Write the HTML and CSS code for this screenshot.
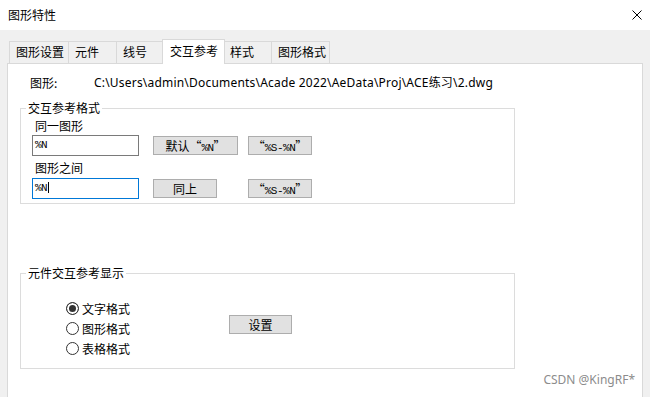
FILE: index.html
```html
<!DOCTYPE html>
<html lang="zh-CN">
<head>
  <meta charset="UTF-8" />
  <title>图形特性</title>
  <link rel="stylesheet" href="styles.css">
</head>
<body>
  <div class="window">
    <div class="titlebar">
      <span class="title">图形特性</span>
      <svg class="close" width="10" height="10" viewBox="0 0 10 10">
        <path d="M0.5 0.5 L9.5 9.5 M9.5 0.5 L0.5 9.5" stroke="#000" stroke-width="1" fill="none" />
      </svg>
    </div>

    <div class="dialog">
      <div class="tabs">
        <div class="tab">图形设置</div>
        <div class="tab short">元件</div>
        <div class="tab short">线号</div>
        <div class="tab active">交互参考</div>
        <div class="tab short">样式</div>
        <div class="tab">图形格式</div>
      </div>

      <div class="panel">
        <div class="file-row">
          <span class="file-label">图形:</span>
          <span class="file-path">C:\Users\admin\Documents\Acade 2022\AeData\Proj\ACE练习\2.dwg</span>
        </div>

        <fieldset class="group">
          <legend>交互参考格式</legend>
          <div class="group-body format-body">
            <div class="field-label">同一图形</div>
            <div class="field-row">
              <div class="textbox">%N</div>
              <button class="btn btn-default">默认<span class="q">“</span><span class="code">%N</span><span class="q">”</span></button>
              <button class="btn btn-quote"><span class="q">“</span><span class="code">%S-%N</span><span class="q">”</span></button>
            </div>
            <div class="field-label second">图形之间</div>
            <div class="field-row second">
              <div class="textbox focused">%N</div>
              <button class="btn btn-same">同上</button>
              <button class="btn btn-quote"><span class="q">“</span><span class="code">%S-%N</span><span class="q">”</span></button>
            </div>
          </div>
        </fieldset>

        <fieldset class="group display-group">
          <legend>元件交互参考显示</legend>
          <div class="group-body display-body">
            <div class="radios">
              <div class="radio checked"><span class="radio-mark"></span>文字格式</div>
              <div class="radio"><span class="radio-mark"></span>图形格式</div>
              <div class="radio"><span class="radio-mark"></span>表格格式</div>
            </div>
            <button class="btn btn-setup">设置</button>
          </div>
        </fieldset>

        <div class="watermark">CSDN @KingRF*</div>
      </div>
    </div>
  </div>
</body>
</html>
```

FILE: styles.css
```css
html, body {
  margin: 0;
  padding: 0;
  background: #f0f0f0;
  font-family: "Noto Sans", "Noto Sans CJK SC", sans-serif;
  font-size: 12px;
  color: #000;
}

.window {
  width: 650px;
  height: 397px;
  overflow: hidden;
  display: flex;
  flex-direction: column;
}

.titlebar {
  flex: none;
  height: 30px;
  background: #fff;
  display: flex;
  align-items: center;
  justify-content: space-between;
  padding: 0 8px;
}

.title {
  font-family: "Noto Sans CJK SC", sans-serif;
  line-height: 16px;
}

.dialog {
  flex: 1;
  display: flex;
  flex-direction: column;
  padding: 9px 7px 0 7px;
  min-height: 0;
}

/* tabs */
.tabs {
  flex: none;
  display: flex;
  align-items: flex-end;
  height: 24px;
  padding-left: 2px;
}

.tab {
  box-sizing: border-box;
  width: 59px;
  height: 22px;
  padding-left: 6px;
  line-height: 20px;
  font-family: "Noto Sans CJK SC", sans-serif;
  background: #f0f0f0;
  border-top: 1px solid #d9d9d9;
  border-left: 1px solid #d9d9d9;
  white-space: nowrap;
}

.tab.short {
  width: 48px;
}

.tab:last-child {
  border-right: 1px solid #d9d9d9;
}

.tab.active {
  position: relative;
  z-index: 2;
  width: 63px;
  height: 25px;
  margin: 0 -2px -1px -2px;
  padding-left: 7px;
  line-height: 21px;
  background: #fff;
  border-right: 1px solid #d9d9d9;
}

/* page */
.panel {
  flex: 1;
  position: relative;
  background: #fff;
  border: 1px solid #d9d9d9;
  border-bottom: none;
  padding: 11px 12px 0 12px;
}

.file-row {
  display: flex;
  margin-left: 10px;
  line-height: 16px;
}

.file-label {
  width: 64px;
  font-family: "Noto Sans CJK SC", sans-serif;
}

.file-path {
  letter-spacing: 0.2px;
}

.group {
  box-sizing: border-box;
  width: 495px;
  margin: 9px 0 0 0;
  padding: 0;
  min-inline-size: 0;
  border: 1px solid #dcdcdc;
}

.group legend {
  margin-left: 5px;
  padding: 0 2px;
  line-height: 16px;
  font-family: "Noto Sans CJK SC", sans-serif;
}

.group-body {
  padding: 2px 0 4px 11px;
}

.field-label {
  margin-left: 3px;
  line-height: 16px;
  font-family: "Noto Sans CJK SC", sans-serif;
}

.field-label.second {
  margin-top: 4px;
}

.field-row {
  display: flex;
  align-items: center;
  width: 280px;
  margin-top: 1px;
}

.field-row.second {
  margin-top: 2px;
}

.textbox {
  box-sizing: border-box;
  width: 107px;
  height: 21px;
  padding-left: 2px;
  border: 1px solid #7a7a7a;
  font-family: "Liberation Mono", monospace;
  font-size: 11px;
  letter-spacing: -0.5px;
  line-height: 19px;
}

.textbox.focused {
  border-color: #0078d7;
}

.textbox.focused::after {
  content: "";
  display: inline-block;
  width: 1px;
  height: 11px;
  margin-left: 1px;
  background: #000;
  vertical-align: -2px;
}

.btn {
  box-sizing: border-box;
  height: 19px;
  padding: 0;
  border: 1px solid #adadad;
  border-radius: 0;
  background: #e1e1e1;
  color: #000;
  font-family: "Noto Sans CJK SC", sans-serif;
  font-size: 12px;
  line-height: 17px;
  text-align: center;
  white-space: nowrap;
}

.btn .q {
  font-feature-settings: "fwid";
}

.btn .code {
  font-family: "Liberation Mono", monospace;
  font-size: 11px;
  letter-spacing: -0.5px;
}

.btn-default {
  width: 85px;
  margin-left: 14px;
}

.btn-same {
  width: 64px;
  margin-left: 14px;
}

.btn-quote {
  width: 64px;
  margin-left: auto;
}

.display-group {
  margin-top: 61px;
}

.display-body {
  display: flex;
  align-items: flex-start;
  padding: 17px 0 10px 45px;
}

.radios {
  width: 163px;
}

.radio {
  display: flex;
  align-items: center;
  height: 20px;
  font-family: "Noto Sans CJK SC", sans-serif;
}

.radio-mark {
  box-sizing: border-box;
  width: 13px;
  height: 13px;
  margin-right: 3px;
  border: 1px solid #333;
  border-radius: 50%;
  background: #fff;
}

.radio.checked .radio-mark {
  background: #333;
  box-shadow: inset 0 0 0 2px #fff;
}

.btn-setup {
  width: 63px;
  margin-top: 17px;
}

.watermark {
  position: absolute;
  right: 7px;
  bottom: 9px;
  line-height: 16px;
  color: #8c8c8c;
  font-family: "Noto Sans", sans-serif;
}
```
